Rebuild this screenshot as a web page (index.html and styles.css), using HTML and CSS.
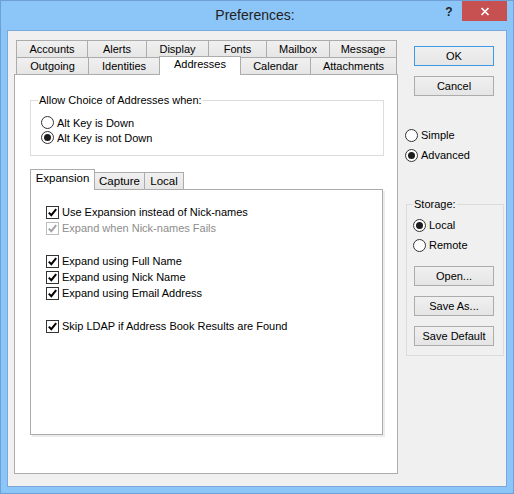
FILE: index.html
```html
<!DOCTYPE html>
<html lang="en">
<head>
    <meta charset="UTF-8">
    <title>Preferences</title>
    <link rel="stylesheet" href="styles.css">
</head>
<body>
    <div class="window">
        <div class="titlebar">
            <div class="title">Preferences:</div>
            <div class="help">?</div>
            <div class="close">
                <svg width="10" height="9" viewBox="0 0 10 9">
                    <path d="M1.5 1 L8.5 8 M8.5 1 L1.5 8" stroke="#fff" stroke-width="1.7" fill="none"/>
                </svg>
            </div>
        </div>

        <div class="client">
            <div class="tabctl">
                <div class="tabrow">
                    <div class="tab" style="width:72px">Accounts</div>
                    <div class="tab" style="width:60px">Alerts</div>
                    <div class="tab" style="width:63px">Display</div>
                    <div class="tab" style="width:59px">Fonts</div>
                    <div class="tab" style="width:64px">Mailbox</div>
                    <div class="tab" style="width:68px">Message</div>
                </div>
                <div class="tabrow front">
                    <div class="tab" style="width:73px">Outgoing</div>
                    <div class="tab" style="width:72px">Identities</div>
                    <div class="tab selected" style="width:82px">Addresses</div>
                    <div class="tab" style="width:71px">Calendar</div>
                    <div class="tab" style="width:87px">Attachments</div>
                </div>

                <div class="panel">
                    <div class="group choice">
                        <div class="group-title">Allow Choice of Addresses when:</div>
                        <div class="options">
                            <label class="radio"><span class="mark"></span>Alt Key is Down</label>
                            <label class="radio"><span class="mark on"></span>Alt Key is not Down</label>
                        </div>
                    </div>

                    <div class="subtabs">
                        <div class="subtab selected" style="width:65px">Expansion</div>
                        <div class="subtab" style="width:51px">Capture</div>
                        <div class="subtab" style="width:40px">Local</div>
                    </div>
                    <div class="subpanel">
                        <label class="check"><span class="box"><svg width="11" height="11" viewBox="0 0 11 11"><path d="M1.8 5.6 L4.3 8.2 L9.2 2.2" /></svg></span>Use Expansion instead of Nick-names</label>
                        <label class="check disabled"><span class="box"><svg width="11" height="11" viewBox="0 0 11 11"><path d="M1.8 5.6 L4.3 8.2 L9.2 2.2" /></svg></span>Expand when Nick-names Fails</label>
                        <div class="spacer"></div>
                        <label class="check"><span class="box"><svg width="11" height="11" viewBox="0 0 11 11"><path d="M1.8 5.6 L4.3 8.2 L9.2 2.2" /></svg></span>Expand using Full Name</label>
                        <label class="check"><span class="box"><svg width="11" height="11" viewBox="0 0 11 11"><path d="M1.8 5.6 L4.3 8.2 L9.2 2.2" /></svg></span>Expand using Nick Name</label>
                        <label class="check"><span class="box"><svg width="11" height="11" viewBox="0 0 11 11"><path d="M1.8 5.6 L4.3 8.2 L9.2 2.2" /></svg></span>Expand using Email Address</label>
                        <div class="spacer"></div>
                        <label class="check"><span class="box"><svg width="11" height="11" viewBox="0 0 11 11"><path d="M1.8 5.6 L4.3 8.2 L9.2 2.2" /></svg></span>Skip LDAP if Address Book Results are Found</label>
                    </div>
                </div>
            </div>

            <div class="side">
                <button class="btn default">OK</button>
                <button class="btn cancel">Cancel</button>

                <div class="mode">
                    <label class="radio tall"><span class="mark"></span>Simple</label>
                    <label class="radio tall"><span class="mark on"></span>Advanced</label>
                </div>

                <div class="group storage">
                    <div class="group-title">Storage:</div>
                    <div class="options">
                        <label class="radio tall"><span class="mark on"></span>Local</label>
                        <label class="radio tall"><span class="mark"></span>Remote</label>
                    </div>
                    <button class="btn">Open...</button>
                    <button class="btn">Save As...</button>
                    <button class="btn">Save Default</button>
                </div>
            </div>
        </div>
    </div>
</body>
</html>
```

FILE: styles.css
```css
* { margin: 0; padding: 0; box-sizing: border-box; }
body {
    font-family: "Liberation Sans", Arial, sans-serif;
    font-size: 11px;
    color: #000;
    background-color: #8cc5f7;
}
.window {
    width: 514px;
    height: 494px;
    background-color: #8cc5f7;
    border: 1px solid #6f9fd4;
    display: flex;
    flex-direction: column;
}
.titlebar {
    height: 29px;
    display: flex;
    align-items: flex-start;
}
.title {
    flex: 1;
    text-align: center;
    padding-left: 68px;
    font-size: 14px;
    line-height: 28px;
    color: #222;
}
.help {
    width: 16px;
    margin-right: 5px;
    text-align: center;
    font-size: 12px;
    font-weight: bold;
    line-height: 22px;
    color: #222;
}
.close {
    width: 45px;
    height: 20px;
    margin-right: 6px;
    background-color: #c75050;
    display: flex;
    align-items: center;
    justify-content: center;
}
.client {
    flex: 1;
    margin: 0 6px 6px;
    border: 1px solid #78a8dc;
    background-color: #f0f0f0;
    display: flex;
    padding: 9px 0 0 6px;
}

/* main tab control */
.tabctl {
    width: 384px;
}
.tabrow {
    display: flex;
    padding-left: 2px;
}
.tabrow.front {
    height: 17px;
    margin-top: -1px;
    align-items: flex-end;
}
.tab {
    height: 18px;
    border: 1px solid #acacac;
    background: linear-gradient(#f0f0f0, #e6e6e6);
    text-align: center;
    line-height: 16px;
    margin-left: -1px;
}
.tab:first-child { margin-left: 0; }
.tabrow.front .tab {
    height: 17px;
    border-bottom: none;
}
.tabrow.front .tab.selected {
    height: 19px;
    margin-bottom: -1px;
    background: #fff;
    position: relative;
    z-index: 1;
    line-height: 15px;
}
.panel {
    height: 400px;
    border: 1px solid #acacac;
    background-color: #fff;
    padding: 0 13px 0 15px;
}

/* group boxes */
.group {
    border: 1px solid #dcdcdc;
}
.group-title {
    width: fit-content;
    margin: -7px 0 0 7px;
    padding: 0 1px;
    line-height: 13px;
    background-color: #fff;
}
.choice {
    margin-top: 25px;
    height: 56px;
}
.choice .options {
    margin: 8px 0 0 10px;
}
.radio {
    display: flex;
    align-items: center;
    height: 15px;
}
.radio.tall { height: 20px; }
.mark {
    width: 13px;
    height: 13px;
    border: 1px solid #333;
    border-radius: 50%;
    background-color: #fff;
    margin-right: 3px;
    display: flex;
    align-items: center;
    justify-content: center;
}
.mark.on::after {
    content: '';
    width: 7px;
    height: 7px;
    border-radius: 50%;
    background-color: #1c1c1c;
}

/* inner tab control */
.subtabs {
    display: flex;
    align-items: flex-end;
    height: 20px;
    margin-top: 13px;
}
.subtab {
    height: 17px;
    border: 1px solid #acacac;
    border-bottom: none;
    background: linear-gradient(#f0f0f0, #e6e6e6);
    text-align: center;
    line-height: 17px;
    font-size: 11.5px;
    margin-left: -1px;
}
.subtab:first-child { margin-left: 0; }
.subtab.selected {
    height: 21px;
    margin-bottom: -1px;
    background: #fff;
    position: relative;
    z-index: 1;
    line-height: 17px;
}
.subpanel {
    width: 353px;
    height: 246px;
    border: 1px solid #acacac;
    background-color: #fff;
    box-shadow: 2px 2px 0 #ebebeb;
    padding: 14px 0 0 15px;
}
.check {
    display: flex;
    align-items: center;
    height: 16px;
}
.check .box {
    width: 13px;
    height: 13px;
    border: 1px solid #333;
    background-color: #fff;
    margin-right: 3px;
    display: flex;
    align-items: center;
    justify-content: center;
}
.check .box svg path {
    fill: none;
    stroke: #000;
    stroke-width: 2;
}
.check.disabled { color: #8d8d8d; }
.check.disabled .box { border-color: #bcbcbc; }
.check.disabled .box svg path { stroke: #a2a2a2; }
.spacer { height: 17px; }

/* right column */
.side {
    flex: 1;
    margin-left: 7px;
    padding-top: 6px;
    display: flex;
    flex-direction: column;
}
.btn {
    width: 80px;
    height: 20px;
    margin-left: 9px;
    border: 1px solid #acacac;
    background: linear-gradient(#f0f0f0, #e5e5e5);
    font-family: "Liberation Sans", Arial, sans-serif;
    font-size: 11px;
    color: #000;
}
.btn.default { border-color: #3c9ae6; }
.btn.cancel { margin-top: 10px; }
.mode {
    margin-top: 29px;
}
.storage {
    margin: 39px 0 0 1px;
    width: 98px;
    height: 152px;
}
.storage .group-title {
    margin-left: 6px;
    background-color: #f0f0f0;
}
.storage .options {
    margin: 4px 0 0 6px;
}
.storage .btn {
    margin: 11px 0 0 7px;
}
.storage .btn + .btn {
    margin-top: 10px;
}
```
